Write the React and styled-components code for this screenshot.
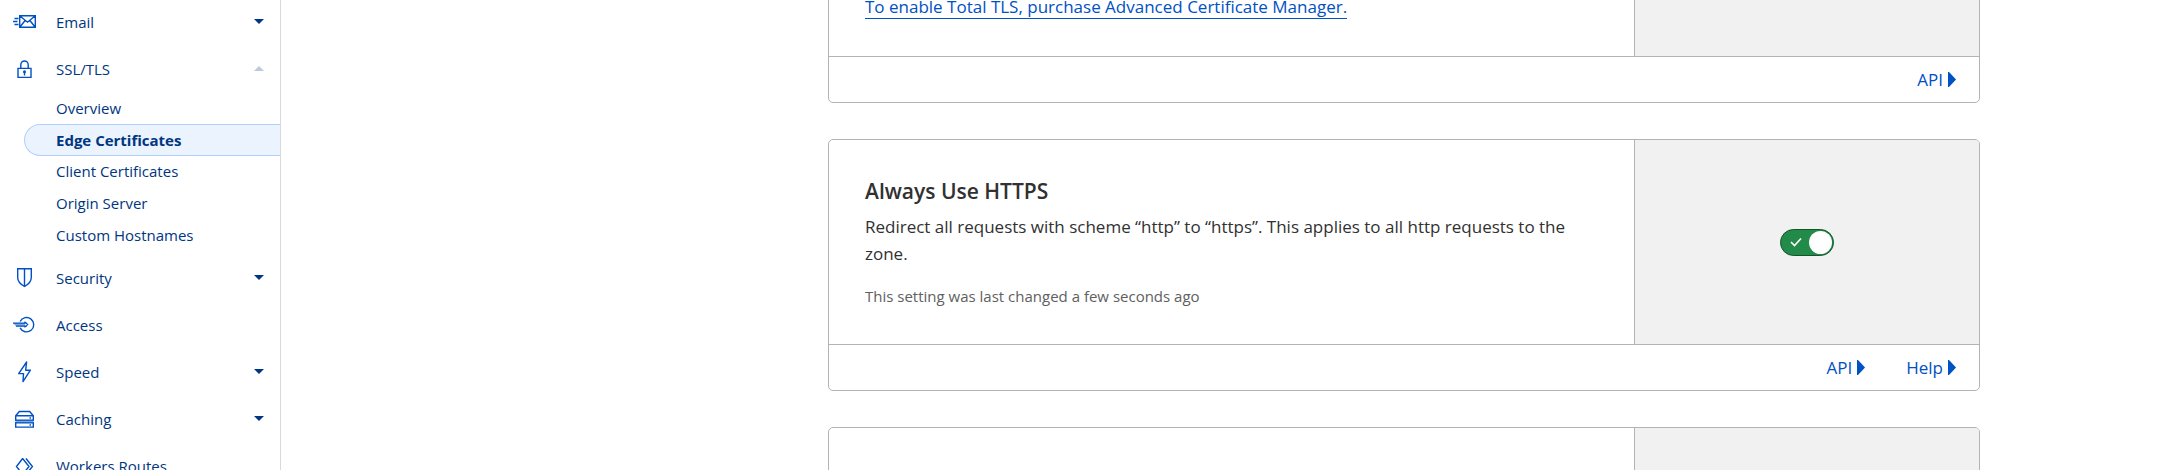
import React, { useState } from "react";
import styled, { createGlobalStyle, css } from "styled-components";

const navy = "#003681";
const blue = "#0051c3";
const line = "#b3b3b3";

const GlobalStyle = createGlobalStyle`
  * { box-sizing: border-box; }
  body {
    margin: 0;
    background: #fff;
    color: #313131;
    font-family: "Open Sans", "Noto Sans", sans-serif;
    font-size: 17px;
    line-height: 27px;
  }
`;

const Page = styled.div`
  display: flex;
  height: 100vh;
  overflow: hidden;
`;

const Sidebar = styled.nav`
  flex: 0 0 281px;
  border-right: 1px solid #d9d9d9;
  overflow: hidden;
  font-size: 15px;
  line-height: 24px;
`;

const NavList = styled.ul`
  list-style: none;
  margin: -2px 0 0;
  padding: 0;
`;

const NavButton = styled.button`
  display: flex;
  align-items: center;
  gap: 19px;
  width: 100%;
  height: 47px;
  padding: 0 16px 0 12px;
  border: 0;
  background: none;
  color: ${navy};
  font: inherit;
  text-align: left;
  cursor: pointer;
`;

const NavLabel = styled.span`
  flex: 1;
`;

const NavIcon = styled.svg`
  flex: none;
  width: 25px;
  height: 25px;
  fill: none;
  stroke: ${blue};
  stroke-width: 1.4;
`;

const Caret = styled.svg`
  width: 10px;
  height: 5px;
  fill: ${(p) => (p.$open ? "#bccada" : navy)};
`;

const SubList = styled.ul`
  list-style: none;
  margin: 0 0 3px;
  padding: 0 0 0 24px;
`;

const SubLink = styled.a`
  display: flex;
  align-items: center;
  height: 32px;
  padding-left: 31px;
  border: 1px solid transparent;
  border-right: 0;
  border-radius: 16px 0 0 16px;
  color: ${navy};
  line-height: 22px;
  text-decoration: none;
  ${(p) =>
    p.$active &&
    css`
      margin-bottom: -1px;
      background: #ebf3ff;
      border-color: #b0d0ff;
      font-weight: 700;
    `}
`;

const Main = styled.main`
  flex: 1;
  min-width: 0;
  overflow: hidden;
  padding: 0 184px 0 547px;
`;

const CardStack = styled.div`
  display: flex;
  flex-direction: column;
  gap: 36px;
  margin-top: -44px;
`;

const Card = styled.section`
  border: 1px solid ${line};
  border-radius: 5px;
  overflow: hidden;
  flex: none;
`;

const CardBody = styled.div`
  display: flex;
`;

const CardContent = styled.div`
  flex: 1;
  min-width: 0;
  padding: 36px;
`;

const CardAside = styled.div`
  flex: 0 0 30%;
  display: flex;
  align-items: center;
  justify-content: center;
  border-left: 1px solid ${line};
  background: #f1f1f1;
`;

const CardFooter = styled.footer`
  display: flex;
  align-items: center;
  justify-content: flex-end;
  gap: 41px;
  height: 46px;
  padding-right: 23px;
  border-top: 1px solid ${line};
`;

const FooterButton = styled.button`
  display: flex;
  align-items: center;
  gap: 5px;
  padding: 0;
  border: 0;
  background: none;
  color: ${blue};
  font: inherit;
  cursor: pointer;
`;

const Arrow = styled.svg`
  width: 8px;
  height: 15px;
  fill: ${blue};
`;

const Title = styled.h2`
  margin: 0 0 6px;
  font-size: 21px;
  font-weight: 600;
  line-height: 31px;
`;

const Text = styled.p`
  margin: 0;
`;

const Note = styled.p`
  margin: 18px 0 0;
  color: #606060;
  font-size: 15px;
  line-height: 23px;
`;

const UpgradeLink = styled.a`
  color: ${blue};
  text-decoration: none;
  border-bottom: 1px solid ${blue};
`;

const ToggleLabel = styled.label`
  display: grid;
  width: 54px;
  height: 27px;
  cursor: pointer;
  & > * {
    grid-area: 1 / 1;
  }
`;

const ToggleInput = styled.input`
  appearance: none;
  display: flex;
  align-items: center;
  width: 54px;
  height: 27px;
  margin: 0;
  padding: 0 1px;
  border: 1px solid #14532c;
  border-radius: 14px;
  background: #797979;
  &::after {
    content: "";
    width: 23px;
    height: 23px;
    border-radius: 50%;
    background: #fff;
  }
  &:checked {
    justify-content: flex-end;
    background: #228b49;
  }
`;

const Check = styled.svg`
  align-self: center;
  width: 12px;
  height: 10px;
  margin-left: 10px;
  fill: none;
  stroke: #fff;
  stroke-width: 1.6;
  pointer-events: none;
`;

const icons = {
  email: (
    <>
      <path d="M7.7 6.7h15.6v11.6H7.7zM7.7 6.7l7.8 6.5 7.8-6.5M7.7 18.3l5.4-6.8M23.3 18.3l-5.4-6.8" />
      <path d="M2.5 9.5h4M1 12.5h4.5M2.5 15.5h4" />
    </>
  ),
  lock: (
    <>
      <path d="M6 12.4h13v9H6zM8.8 12.4V8.7a3.7 3.7 0 0 1 7.4 0v3.7" />
      <path d="M12.5 15.5v4" />
      <circle cx="12.5" cy="15.8" r=".8" />
    </>
  ),
  shield: (
    <path d="M5.7 3.7h13.6v8.8c0 4.2-3.2 7-6.8 9-3.6-2-6.8-4.8-6.8-9zM12.5 3.7v17.8" />
  ),
  access: (
    <>
      <path d="M8.1 9.5a7.2 7.2 0 1 1 0 6.4" />
      <path d="M1 11h12v3.2H4z" fill="#7fa8e1" stroke="none" />
      <path d="M1 11.2h14M4 14.2h11M12.5 9.8l3.2 2.8-3.2 2.8" strokeWidth="1.2" />
    </>
  ),
  bolt: (
    <path d="M14.6 3 6.7 14.6h4.8L11 22.6l7.4-11.4h-4.7z" strokeLinejoin="round" />
  ),
  drive: (
    <>
      <path d="M3.7 14.2V9.8l3.6-4.3h10.4l3.6 4.3v4.4zM3.7 9.8h17.6M3.7 16.7h17.6v4.4H3.7z" />
      <path d="M3.5 15.5h18" stroke="#7fa8e1" />
      <path d="M17.5 12h1.5M17.5 19h1.5" />
    </>
  ),
  workers: (
    <path d="M10.6 5.5 4.5 13.500l6.100 8M10.6 5.500l6.400 8-6.400 8M14 5.500l6.400 8-6.400 8" />
  ),
};

const sslPages = [
  "Overview",
  "Edge Certificates",
  "Client Certificates",
  "Origin Server",
  "Custom Hostnames",
];

const sections = [
  { label: "Email", icon: "email", menu: true },
  { label: "SSL/TLS", icon: "lock", menu: true, pages: sslPages },
  { label: "Security", icon: "shield", menu: true },
  { label: "Access", icon: "access" },
  { label: "Speed", icon: "bolt", menu: true },
  { label: "Caching", icon: "drive", menu: true },
  { label: "Workers Routes", icon: "workers" },
];

function NavSection({ label, icon, menu, pages }) {
  const open = Boolean(pages);
  return (
    <li>
      <NavButton type="button" aria-expanded={menu ? open : undefined}>
        <NavIcon viewBox="0 0 25 25" aria-hidden="true">
          {icons[icon]}
        </NavIcon>
        <NavLabel>{label}</NavLabel>
        {menu && (
          <Caret viewBox="0 0 10 5" $open={open} aria-hidden="true">
            <path d={open ? "M0 5h10L5 0z" : "M0 0h10L5 5z"} />
          </Caret>
        )}
      </NavButton>
      {open && (
        <SubList>
          {pages.map((page) => (
            <li key={page}>
              <SubLink
                href="#"
                $active={page === "Edge Certificates"}
                aria-current={page === "Edge Certificates" ? "page" : undefined}
              >
                {page}
              </SubLink>
            </li>
          ))}
        </SubList>
      )}
    </li>
  );
}

function SettingCard({ children, control, actions }) {
  return (
    <Card>
      <CardBody>
        <CardContent>{children}</CardContent>
        <CardAside>{control}</CardAside>
      </CardBody>
      <CardFooter>
        {actions.map((action) => (
          <FooterButton type="button" key={action}>
            {action}
            <Arrow viewBox="0 0 8 15" aria-hidden="true">
              <path d="M0 0h1l7 7.5L1 15H0z" />
            </Arrow>
          </FooterButton>
        ))}
      </CardFooter>
    </Card>
  );
}

function Toggle({ label }) {
  const [on, setOn] = useState(true);
  return (
    <ToggleLabel>
      <ToggleInput
        type="checkbox"
        role="switch"
        aria-label={label}
        checked={on}
        onChange={(e) => setOn(e.target.checked)}
      />
      {on && (
        <Check viewBox="0 0 12 10" aria-hidden="true">
          <path d="M1 5l3.5 3.5L11 1.5" />
        </Check>
      )}
    </ToggleLabel>
  );
}

export default function App() {
  return (
    <>
      <GlobalStyle />
      <Page>
        <Sidebar aria-label="Zone">
          <NavList>
            {sections.map((section) => (
              <NavSection key={section.label} {...section} />
            ))}
          </NavList>
        </Sidebar>
        <Main>
          <CardStack>
            <SettingCard actions={["API"]}>
              <Text>
                <UpgradeLink href="#">
                  To enable Total TLS, purchase Advanced Certificate Manager.
                </UpgradeLink>
              </Text>
            </SettingCard>
            <SettingCard
              actions={["API", "Help"]}
              control={<Toggle label="Always Use HTTPS" />}
            >
              <Title>Always Use HTTPS</Title>
              <Text>
                Redirect all requests with scheme “http” to “https”. This
                applies to all http requests to the zone.
              </Text>
              <Note>This setting was last changed a few seconds ago</Note>
            </SettingCard>
            <SettingCard actions={[]} />
          </CardStack>
        </Main>
      </Page>
    </>
  );
}
